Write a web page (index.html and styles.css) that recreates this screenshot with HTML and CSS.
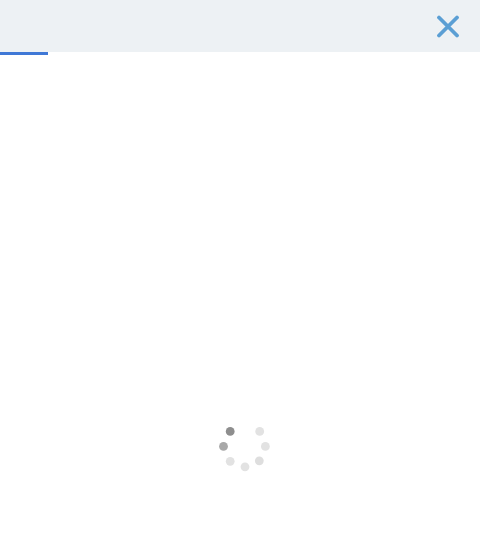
FILE: index.html
```html
<!DOCTYPE html>
<html lang="en">
<head>
<meta charset="utf-8">
<title>Loading</title>
<link rel="stylesheet" href="styles.css">
</head>
<body>
<header class="topbar">
  <svg class="close" viewBox="0 0 24 24" width="24" height="24" aria-label="Close">
    <path d="M3 3.5 L21 21.5 M21 3.5 L3 21.5" fill="none" stroke="#5b9fd4" stroke-width="3.8" stroke-linecap="round"/>
  </svg>
</header>
<div class="progress"><div class="progress-fill"></div></div>
<main class="content">
  <svg class="spinner" viewBox="0 0 50 44" width="50" height="44" aria-label="Loading">
    <circle cx="7.2" cy="4.4" r="4.4" fill="#8e8e8e"/>
    <circle cx="36.7" cy="4.4" r="4.4" fill="#e2e2e2"/>
    <circle cx="0.5" cy="19.4" r="4.4" fill="#a8a8a8"/>
    <circle cx="42.4" cy="19.4" r="4.4" fill="#e2e2e2"/>
    <circle cx="7.2" cy="34.3" r="4.4" fill="#e2e2e2"/>
    <circle cx="36.3" cy="33.8" r="4.4" fill="#dedede"/>
    <circle cx="22" cy="39.8" r="4.4" fill="#e2e2e2"/>
  </svg>
</main>
</body>
</html>
```
FILE: styles.css
```css
html, body {
  margin: 0;
  padding: 0;
  height: 100%;
  background: #ffffff;
  overflow: hidden;
}
.topbar {
  height: 52px;
  background: #edf1f4;
  display: flex;
  align-items: center;
  justify-content: flex-end;
  padding-right: 20px;
}
.close {
  display: block;
}
.progress {
  height: 3px;
}
.progress-fill {
  width: 48px;
  height: 100%;
  background: #3f78d6;
}
.content {
  padding: 372px 0 0 223px;
}
.spinner {
  display: block;
  overflow: visible;
}
```
